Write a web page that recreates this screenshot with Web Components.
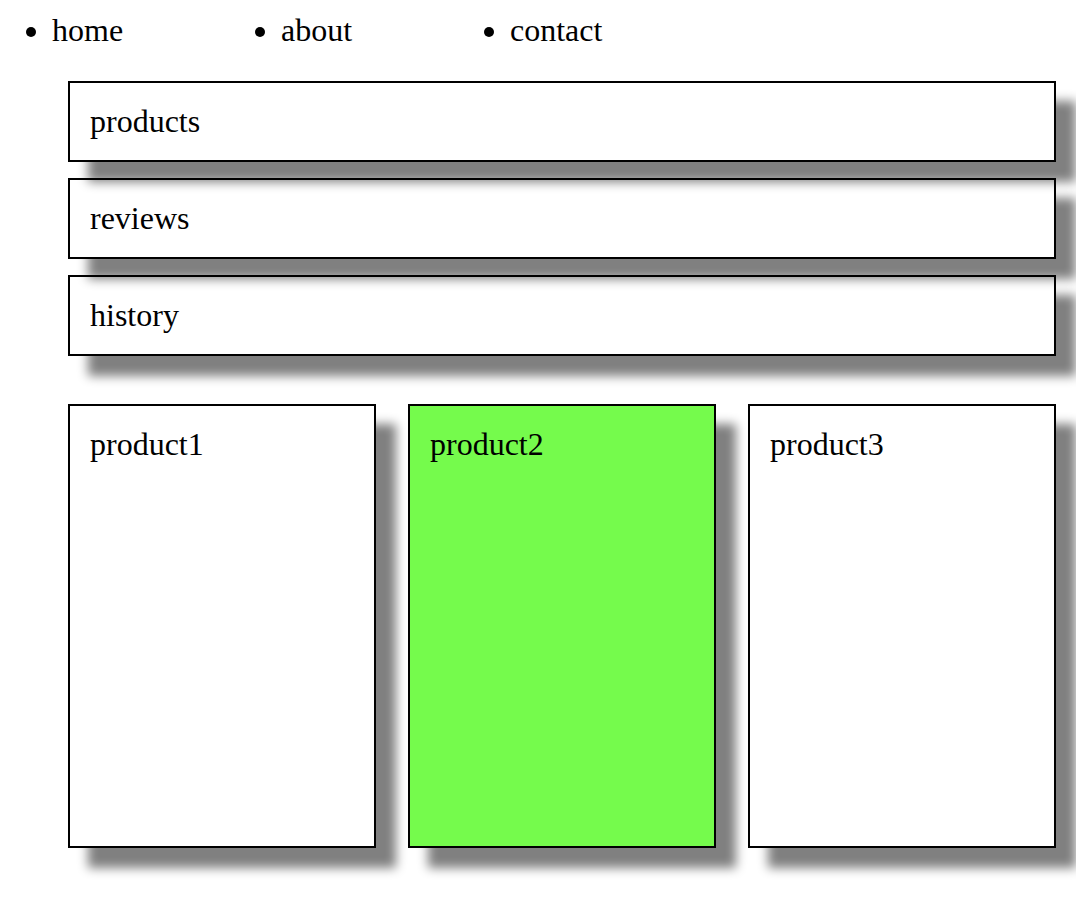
<!DOCTYPE html>
<html lang="en">
<head>
<meta charset="utf-8">
<meta name="viewport" content="width=device-width, initial-scale=1">
<title>Products</title>
<style>
  body {
    margin: 0;
    background: #fff;
    color: #000;
    font: 32px/37px "Liberation Serif", "Times New Roman", serif;
  }
</style>
</head>
<body>
<shop-page>
  <site-nav slot="nav">
    <a slot="first" href="#home">home</a>
    <a slot="second" href="#about">about</a>
    <a slot="third" href="#contact">contact</a>
  </site-nav>
  <panel-stack>
    <shadow-box>products</shadow-box>
    <shadow-box>reviews</shadow-box>
    <shadow-box>history</shadow-box>
  </panel-stack>
  <product-grid>
    <shadow-box>product1</shadow-box>
    <shadow-box highlighted>product2</shadow-box>
    <shadow-box>product3</shadow-box>
  </product-grid>
</shop-page>

<template id="shop-page">
  <style>
    :host { display: block; }
    header { padding: 12px 20px 0 52px; }
    main {
      display: flex;
      flex-direction: column;
      gap: 48px;
      padding: 32px 20px 48px 68px;
    }
  </style>
  <header><slot name="nav"></slot></header>
  <main><slot></slot></main>
</template>

<template id="site-nav">
  <style>
    :host { display: block; }
    ul {
      display: grid;
      grid-template-columns: repeat(3, minmax(auto, 229px));
      margin: 0;
      padding: 0;
      list-style: disc outside;
    }
    ::slotted(a) { color: inherit; text-decoration: none; }
  </style>
  <nav>
    <ul>
      <li><slot name="first"></slot></li>
      <li><slot name="second"></slot></li>
      <li><slot name="third"></slot></li>
    </ul>
  </nav>
</template>

<template id="panel-stack">
  <style>
    :host { display: flex; flex-direction: column; gap: 16px; }
  </style>
  <slot></slot>
</template>

<template id="product-grid">
  <style>
    :host {
      display: grid;
      grid-template-columns: repeat(3, 1fr);
      gap: 32px;
    }
    ::slotted(shadow-box) { min-height: 444px; }
  </style>
  <slot></slot>
</template>

<template id="shadow-box">
  <style>
    :host {
      display: block;
      box-sizing: border-box;
      padding: 20px;
      border: 2px solid #000;
      box-shadow: 20px 20px 10px #808080;
    }
    :host([highlighted]) { background: #75fb4c; }
  </style>
  <slot></slot>
</template>

<script>
  class TemplateElement extends HTMLElement {
    constructor() {
      super();
      const template = document.getElementById(this.localName);
      this.attachShadow({ mode: "open" }).append(template.content.cloneNode(true));
    }
  }

  customElements.define("shop-page", class ShopPage extends TemplateElement {});
  customElements.define("site-nav", class SiteNav extends TemplateElement {});
  customElements.define("panel-stack", class PanelStack extends TemplateElement {});
  customElements.define("product-grid", class ProductGrid extends TemplateElement {});
  customElements.define("shadow-box", class ShadowBox extends TemplateElement {});
</script>
</body>
</html>
